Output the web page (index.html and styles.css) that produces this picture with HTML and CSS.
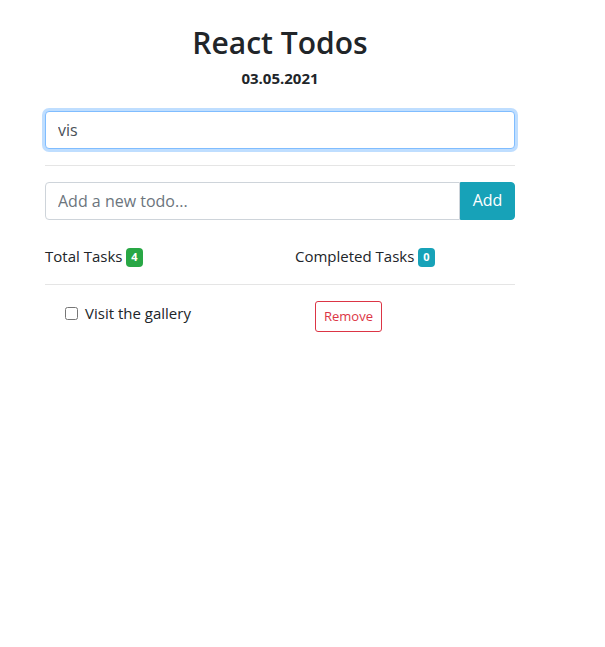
FILE: index.html
```html
<!DOCTYPE html>
<html lang="en">
<head>
<meta charset="utf-8">
<title>React Todos</title>
<link rel="stylesheet" href="styles.css">
</head>
<body>
<div class="app">
  <header class="head">
    <h1 class="title">React Todos</h1>
    <div class="date">03.05.2021</div>
  </header>
  <input class="field field-focus" type="text" value="vis">
  <hr class="rule">
  <div class="add-group">
    <input class="field field-grow" type="text" placeholder="Add a new todo...">
    <button class="btn-add" type="button">Add</button>
  </div>
  <div class="stats">
    <div class="stat">Total Tasks <span class="badge badge-green">4</span></div>
    <div class="stat">Completed Tasks <span class="badge badge-teal">0</span></div>
  </div>
  <hr class="rule">
  <ul class="todos">
    <li class="todo">
      <label class="todo-label"><input class="check" type="checkbox"> Visit the gallery</label>
      <div class="todo-action"><button class="btn-remove" type="button">Remove</button></div>
    </li>
  </ul>
</div>
</body>
</html>
```
FILE: styles.css
```css
* { box-sizing: border-box; }
body {
  margin: 0;
  font-family: "Segoe UI", "Open Sans", "Noto Sans", sans-serif;
  font-size: 15px;
  line-height: 1.6;
  color: #212529;
  background: #fff;
}
.app {
  width: 470px;
  margin-left: 45px;
  padding-top: 25px;
}
.head { text-align: center; }
.title {
  margin: 0;
  font-size: 30px;
  font-weight: 600;
  line-height: 1.2;
}
.date {
  margin-top: 5px;
  font-weight: 700;
  font-size: 15px;
}
.field {
  display: block;
  width: 100%;
  height: 38px;
  padding: 6px 12px;
  font: inherit;
  font-size: 16px;
  color: #495057;
  background: #fff;
  border: 1px solid #ced4da;
  border-radius: 4px;
  outline: none;
}
.field::placeholder { color: #6c757d; }
.field-focus {
  margin-top: 21px;
  border-color: #80bdff;
  box-shadow: 0 0 0 3px rgba(0, 123, 255, 0.25);
}
.rule {
  margin: 16px 0;
  border: 0;
  border-top: 1px solid rgba(0, 0, 0, 0.1);
}
.add-group { display: flex; }
.field-grow {
  flex: 1;
  border-radius: 4px 0 0 4px;
}
.btn-add {
  width: 55px;
  height: 38px;
  font: inherit;
  font-size: 16px;
  color: #fff;
  background: #17a2b8;
  border: 1px solid #17a2b8;
  border-radius: 0 4px 4px 0;
}
.stats {
  display: grid;
  grid-template-columns: 250px 1fr;
  margin-top: 24px;
}
.badge {
  display: inline-block;
  padding: 3px 5px 4px;
  font-size: 11px;
  font-weight: 700;
  line-height: 1.1;
  color: #fff;
  border-radius: 4px;
  vertical-align: 1px;
}
.badge-green { background: #28a745; }
.badge-teal { background: #17a2b8; }
.todos { list-style: none; margin: 0; padding: 0; }
.todo {
  display: grid;
  grid-template-columns: 250px 1fr;
  align-items: start;
}
.todo-label {
  padding-left: 20px;
  display: flex;
  align-items: center;
  gap: 7px;
  line-height: 24px;
}
.check { margin: 0; width: 13px; height: 13px; }
.todo-action { padding-left: 20px; }
.btn-remove {
  font-family: inherit;
  font-size: 13px;
  line-height: 1.6;
  padding: 4px 8px;
  color: #dc3545;
  background: #fff;
  border: 1px solid #dc3545;
  border-radius: 3px;
}
```
